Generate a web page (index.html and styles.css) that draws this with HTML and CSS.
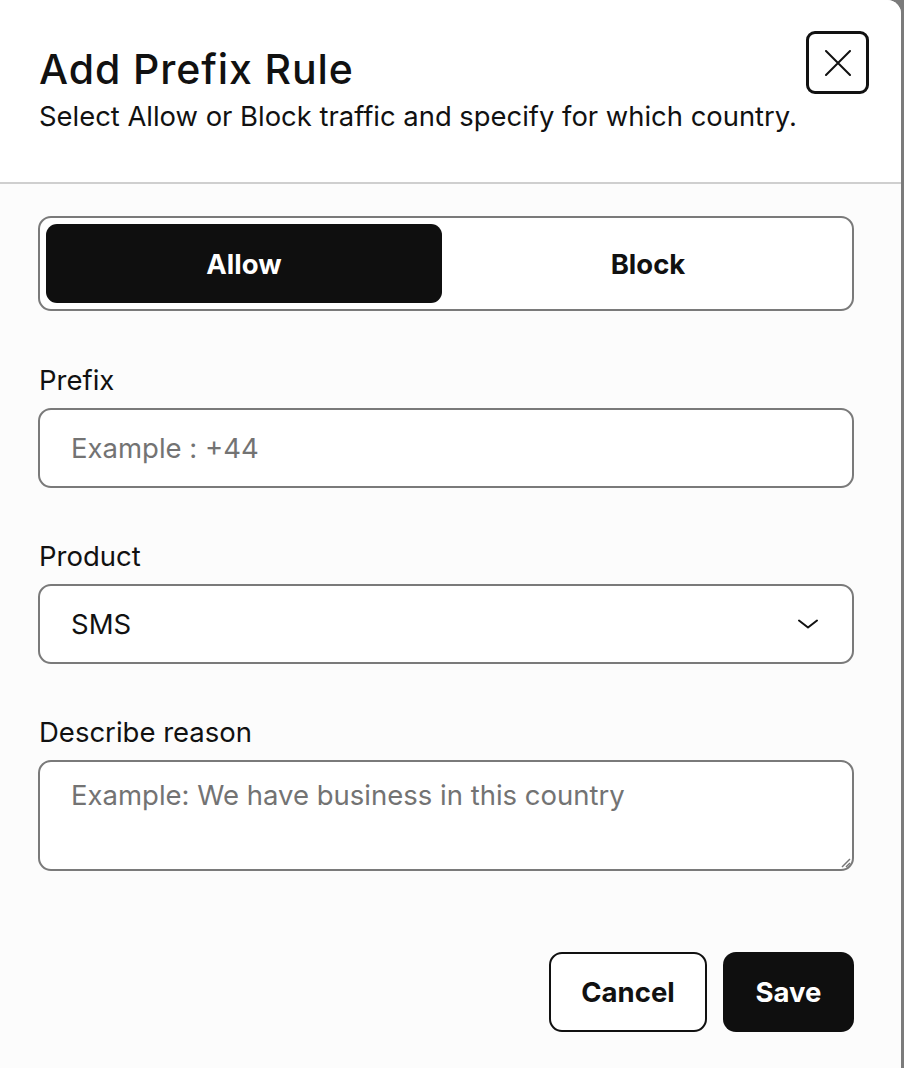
FILE: index.html
```html
<!DOCTYPE html>
<html lang="en">
<head>
<meta charset="utf-8">
<title>Add Prefix Rule</title>
<link rel="stylesheet" href="styles.css">
</head>
<body>
<div class="modal">
  <header class="modal-header">
    <div class="heading">
      <h1 class="title">Add Prefix Rule</h1>
      <p class="subtitle">Select Allow or Block traffic and specify for which country.</p>
    </div>
    <button class="close" type="button" aria-label="Close">
      <svg width="26" height="26" viewBox="0 0 26 26" fill="none" stroke="#111" stroke-width="2" stroke-linecap="round"><path d="M1 1 L25 25 M25 1 L1 25"/></svg>
    </button>
  </header>
  <div class="modal-body">
    <div class="segment">
      <button class="seg-btn active" type="button">Allow</button>
      <button class="seg-btn seg-off" type="button">Block</button>
    </div>
    <div class="field">
      <label class="label">Prefix</label>
      <div class="input"><span class="placeholder">Example : +44</span></div>
    </div>
    <div class="field">
      <label class="label">Product</label>
      <div class="input select"><span class="value">SMS</span>
        <svg class="chev" width="20" height="10" viewBox="0 0 20 10" fill="none" stroke="#111" stroke-width="2" stroke-linecap="round" stroke-linejoin="round"><path d="M1 1.5 L10 8.5 L19 1.5"/></svg>
      </div>
    </div>
    <div class="field">
      <label class="label">Describe reason</label>
      <div class="input textarea"><span class="placeholder">Example: We have business in this country</span>
        <svg class="grip" width="12" height="12" viewBox="0 0 12 12" fill="none" stroke="#777" stroke-width="1.5"><path d="M11 3 L3 11 M11 7 L7 11"/></svg>
      </div>
    </div>
    <div class="actions">
      <button class="btn btn-outline" type="button">Cancel</button>
      <button class="btn btn-solid" type="button">Save</button>
    </div>
  </div>
</div>
</body>
</html>
```
FILE: styles.css
```css
* { box-sizing: border-box; }
html, body { margin: 0; padding: 0; }
body {
  background: #7b7b7b;
  font-family: "Inter", "Liberation Sans", sans-serif;
  color: #111;
  width: 904px;
  height: 1068px;
  overflow: hidden;
}
.modal {
  width: 901px;
  height: 1068px;
  background: #fcfcfc;
  border-top-right-radius: 14px;
  overflow: hidden;
}
.modal-header {
  background: #fff;
  height: 184px;
  border-bottom: 2px solid #cfcfcf;
  display: flex;
  justify-content: space-between;
  align-items: flex-start;
  padding: 31px 32px 0 39px;
}
.heading { padding-top: 14px; }
.title {
  margin: 0;
  font-size: 41px;
  line-height: 48px;
  font-weight: 500;
  letter-spacing: 0.9px;
}
.subtitle {
  margin: 6px 0 0;
  font-size: 27.4px;
  line-height: 34px;
  font-weight: 400;
}
.close {
  width: 63px;
  height: 63px;
  border: 3px solid #111;
  border-radius: 9px;
  background: #fff;
  display: flex;
  align-items: center;
  justify-content: center;
  padding: 0;
}
.modal-body {
  padding: 32px 47px 0 38px;
}
.segment {
  height: 95px;
  border: 2px solid #7a7a7a;
  border-radius: 13px;
  padding: 6px;
  display: grid;
  grid-template-columns: 396px 1fr;
  background: #fff;
}
.seg-btn {
  border: 0;
  background: transparent;
  font-family: inherit;
  font-size: 27.5px;
  font-weight: 700;
  color: #111;
  border-radius: 11px;
  padding: 0;
}
.seg-off { padding-left: 8px; }
.seg-btn.active {
  background: #0f0f0f;
  color: #fff;
}
.field { margin-top: 53px; }
.field + .field { margin-top: 52px; }
.label {
  display: block;
  font-size: 27.5px;
  line-height: 32px;
  margin-bottom: 12px;
  margin-left: 1px;
}
.input {
  height: 80px;
  border: 2px solid #7a7a7a;
  border-radius: 13px;
  background: #fff;
  display: flex;
  align-items: center;
  padding: 0 31px;
  font-size: 27.5px;
  line-height: 34px;
  position: relative;
}
.placeholder { color: #737373; }
.select { justify-content: space-between; padding-right: 34px; }
.textarea {
  height: 111px;
  align-items: flex-start;
  padding-top: 16px;
}
.grip { position: absolute; right: 1px; bottom: 1px; }
.actions {
  display: flex;
  justify-content: flex-end;
  gap: 16px;
  margin-top: 81px;
}
.btn {
  height: 80px;
  border-radius: 13px;
  font-family: inherit;
  font-size: 27.5px;
  font-weight: 700;
  padding: 0;
}
.btn-outline {
  width: 158px;
  border: 2px solid #111;
  background: #fff;
  color: #111;
}
.btn-solid {
  width: 131px;
  border: 0;
  background: #0f0f0f;
  color: #fff;
}
```
